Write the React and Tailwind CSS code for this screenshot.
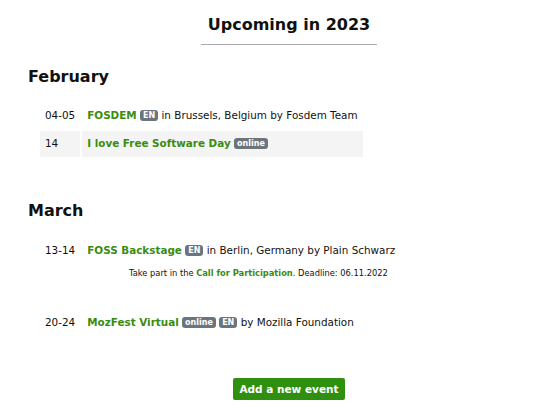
const Badge = ({ children }) => (
  <span className="inline-block rounded-[3px] bg-[#6c757d] px-[3px] text-[8px] font-bold leading-[11px] text-white align-[1px]">
    {children}
  </span>
);

const EventRow = ({ date, name, badges, rest, shaded }) => (
  <tr className={shaded ? "bg-[#f4f4f4]" : ""}>
    <td className="px-[5px] h-[26px] align-middle">{date}</td>
    <td className="px-[5px] h-[26px] align-middle">
      <a className="font-bold text-[#3a8c10]">{name}</a>{" "}
      {badges.map((b) => (
        <span key={b}>
          <Badge>{b}</Badge>{" "}
        </span>
      ))}
      {rest}
    </td>
  </tr>
);

export default function App() {
  return (
    <div className="pl-[28px] pr-[5px] font-['DejaVu_Sans',sans-serif] text-[10.4px] text-[#111]">
      <div className="pt-[14px] text-center">
        <h1 className="inline-block border-b border-[#aaa] px-[7px] pb-[8px] text-[16px] font-bold leading-[22px]">
          Upcoming in 2023
        </h1>
      </div>

      <h2 className="mt-[21px] text-[16px] font-bold leading-[22px]">February</h2>
      <table className="ml-[10px] mt-[13px] border-separate border-spacing-[2px]">
        <tbody>
          <EventRow
            date="04-05"
            name="FOSDEM"
            badges={["EN"]}
            rest="in Brussels, Belgium by Fosdem Team"
          />
          <EventRow date="14" name="I love Free Software Day" badges={["online"]} shaded />
        </tbody>
      </table>

      <h2 className="mt-[41px] text-[16px] font-bold leading-[22px]">March</h2>
      <table className="ml-[10px] mt-[14px] border-separate border-spacing-[2px]">
        <tbody>
          <EventRow
            date="13-14"
            name="FOSS Backstage"
            badges={["EN"]}
            rest="in Berlin, Germany by Plain Schwarz"
          />
        </tbody>
      </table>
      <p className="ml-[101px] mt-[0px] text-[8.3px] leading-[14px]">
        Take part in the <a className="font-bold text-[#3a8c10]">Call for Participation</a>. Deadline: 06.11.2022
      </p>

      <table className="ml-[10px] mt-[28px] border-separate border-spacing-[2px]">
        <tbody>
          <EventRow
            date="20-24"
            name="MozFest Virtual"
            badges={["online", "EN"]}
            rest="by Mozilla Foundation"
          />
        </tbody>
      </table>

      <div className="mt-[40px] flex justify-center">
        <button className="rounded-[2px] bg-[#2f8f0f] px-[6px] py-[4px] text-[10.5px] font-bold leading-[14px] text-white">
          Add a new event
        </button>
      </div>
    </div>
  );
}
